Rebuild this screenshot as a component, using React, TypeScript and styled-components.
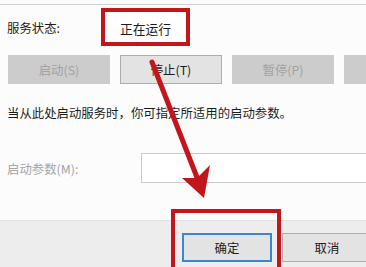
import styled, { createGlobalStyle } from 'styled-components';

const GlobalStyle = createGlobalStyle`
  html, body {
    margin: 0;
    padding: 0;
    background: #fcfcfd;
    overflow: hidden;
  }
`;

const RED = '#c3161c';

const Window = styled.div`
  position: relative;
  width: 366px;
  height: 267px;
  overflow: hidden;
  background: #fcfcfd;
  display: flex;
  flex-direction: column;
  font-family: 'Noto Sans CJK SC', 'Noto Sans', sans-serif;
  font-size: 12.4px;
  color: #1c1c1c;
`;

const Content = styled.div`
  margin-top: 4px;
  border-top: 1px solid #cfcfcf;
  padding: 3px 0 0 7px;
  flex: 1;
  display: flex;
  flex-direction: column;
`;

const StatusRow = styled.div`
  display: flex;
  align-items: center;
  height: 38px;
`;

const Label = styled.span<{ $disabled?: boolean }>`
  width: 94px;
  flex-shrink: 0;
  padding-top: 2px;
  color: ${(p) => (p.$disabled ? '#a4a4a4' : '#1c1c1c')};
`;

const StatusValue = styled.div`
  box-sizing: border-box;
  width: 89px;
  height: 38px;
  border: 4.5px solid ${RED};
  background: #fff;
  display: flex;
  align-items: center;
  justify-content: center;
  padding-top: 2px;
  font-size: 12.8px;
  color: #1c1c1c;
`;

const ButtonRow = styled.div`
  display: flex;
  gap: 10px;
  margin-top: 9px;
  margin-left: 1px;
`;

const ServiceButton = styled.div<{ $enabled?: boolean }>`
  box-sizing: border-box;
  flex-shrink: 0;
  width: 102px;
  height: 29px;
  display: flex;
  align-items: center;
  justify-content: center;
  background: ${(p) => (p.$enabled ? '#e3e3e3' : '#cccccc')};
  border: 1px solid ${(p) => (p.$enabled ? '#adadad' : '#cccccc')};
  color: ${(p) => (p.$enabled ? '#1c1c1c' : '#a2a2a2')};
`;

const Hint = styled.p`
  margin: 21px 0 0;
  line-height: 17px;
  white-space: nowrap;
`;

const ParamRow = styled.div`
  display: flex;
  align-items: center;
  margin-top: 31px;
`;

const ParamLabel = styled(Label)`
  width: 134px;
`;

const ParamInput = styled.div`
  box-sizing: border-box;
  flex-shrink: 0;
  width: 240px;
  height: 30px;
  background: #fff;
  border: 1px solid #cbcbcb;
`;

const Footer = styled.div`
  height: 47px;
  box-sizing: border-box;
  border-top: 1px solid #e2e2e2;
  background: #ededed;
  display: flex;
  gap: 10px;
  padding: 12px 0 0 182px;
`;

const DialogButton = styled.div<{ $primary?: boolean }>`
  position: relative;
  box-sizing: border-box;
  flex-shrink: 0;
  width: 90px;
  height: 29px;
  display: flex;
  align-items: center;
  justify-content: center;
  background: #e3e3e3;
  border: ${(p) => (p.$primary ? '2px solid #3a86d0' : '1px solid #adadad')};
  color: #1c1c1c;
`;

const Highlight = styled.div`
  position: absolute;
  left: -13px;
  right: -11px;
  top: -26px;
  bottom: -15px;
  border: 4.5px solid ${RED};
`;

const ArrowLayer = styled.svg`
  position: absolute;
  left: 0;
  top: 0;
  pointer-events: none;
`;

export default function App() {
  return (
    <>
      <GlobalStyle />
      <Window>
        <Content>
          <StatusRow>
            <Label>服务状态:</Label>
            <StatusValue>正在运行</StatusValue>
          </StatusRow>
          <ButtonRow>
            <ServiceButton>启动(S)</ServiceButton>
            <ServiceButton $enabled>停止(T)</ServiceButton>
            <ServiceButton>暂停(P)</ServiceButton>
            <ServiceButton>恢复(R)</ServiceButton>
          </ButtonRow>
          <Hint>当从此处启动服务时，你可指定所适用的启动参数。</Hint>
          <ParamRow>
            <ParamLabel $disabled>启动参数(M):</ParamLabel>
            <ParamInput />
          </ParamRow>
        </Content>
        <Footer>
          <DialogButton $primary>
            确定
            <Highlight />
          </DialogButton>
          <DialogButton>取消</DialogButton>
        </Footer>
        <ArrowLayer width="366" height="267" viewBox="0 0 366 267">
          <line x1="152" y1="62" x2="198" y2="180" stroke={RED} strokeWidth="5" strokeLinecap="round" />
          <polygon points="204,198 182,178 197,178 210,165" fill={RED} />
        </ArrowLayer>
      </Window>
    </>
  );
}
